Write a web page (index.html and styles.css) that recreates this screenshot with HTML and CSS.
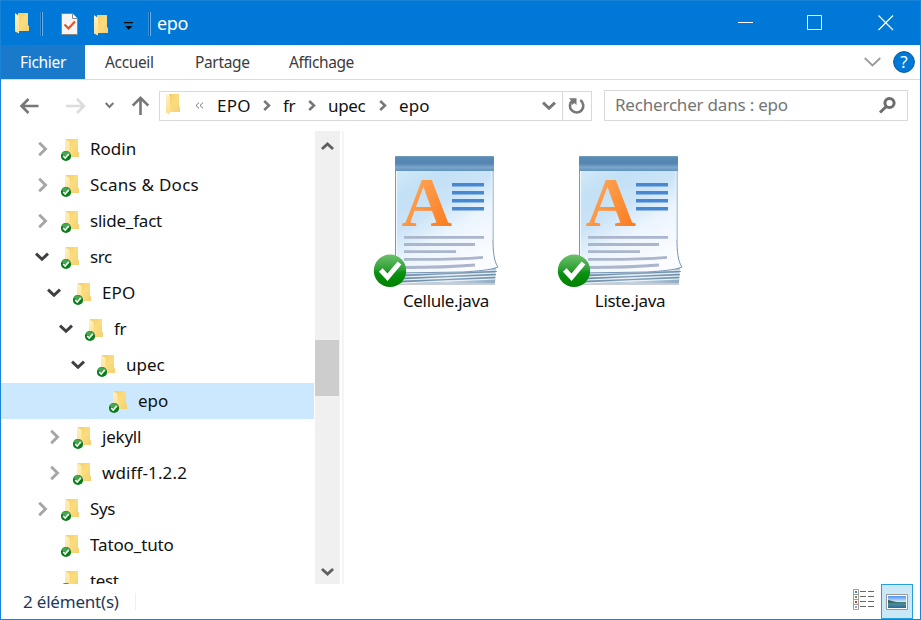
FILE: index.html
```html
<!DOCTYPE html>
<html lang="fr">
<head>
<meta charset="utf-8">
<title>epo</title>
<link rel="stylesheet" href="styles.css">
</head>
<body>
<svg class="defs" width="0" height="0" aria-hidden="true">
  <defs>
    <linearGradient id="gold" x1="0" y1="0" x2="1" y2="1"><stop offset="0" stop-color="#f6cf69"/><stop offset=".5" stop-color="#fbdc7f"/><stop offset="1" stop-color="#f3cf73"/></linearGradient>
    <linearGradient id="flap" x1="0" y1="0" x2="0" y2="1"><stop offset="0" stop-color="#fff0bb"/><stop offset="1" stop-color="#fbe094"/></linearGradient>
    <linearGradient id="green" x1="0" y1="0" x2="0" y2="1"><stop offset="0" stop-color="#6cc06a"/><stop offset=".45" stop-color="#2ea035"/><stop offset=".55" stop-color="#0b9212"/><stop offset="1" stop-color="#008000"/></linearGradient>
    <linearGradient id="band" x1="0" y1="0" x2="0" y2="1"><stop offset="0" stop-color="#5a8db9"/><stop offset=".5" stop-color="#5585b0"/><stop offset=".75" stop-color="#7ba6cb"/><stop offset="1" stop-color="#5e92bd"/></linearGradient>
    <linearGradient id="paper" x1="0" y1="0" x2=".6" y2="1"><stop offset="0" stop-color="#d3eafa"/><stop offset=".22" stop-color="#c3e0f5"/><stop offset=".45" stop-color="#cbe4f7"/><stop offset=".68" stop-color="#ecf5fd"/><stop offset="1" stop-color="#fafcff"/></linearGradient>
    <linearGradient id="orange" x1="0" y1="0" x2="1" y2="1"><stop offset="0" stop-color="#ffb36b"/><stop offset="1" stop-color="#fa7414"/></linearGradient>
    <linearGradient id="sheets" x1="0" y1="0" x2="1" y2="0"><stop offset="0" stop-color="#7b98b3"/><stop offset=".5" stop-color="#c5d6e5"/><stop offset="1" stop-color="#91abc3"/></linearGradient>
    <linearGradient id="sky" x1="0" y1="0" x2="0" y2="1"><stop offset="0" stop-color="#4f8ff3"/><stop offset=".5" stop-color="#d8edf8"/><stop offset=".52" stop-color="#477c70"/><stop offset=".7" stop-color="#458b9a"/><stop offset="1" stop-color="#2b67a8"/></linearGradient>
  </defs>
  <symbol id="folder" viewBox="0 0 18 22">
    <path fill="url(#gold)" d="M4 1h10v12l1 1v5H4z"/>
    <path fill="url(#flap)" d="M1 1l4 3v17.500l-4-2z"/>
  </symbol>
  <symbol id="synced" viewBox="0 0 19 24">
    <path fill="url(#gold)" d="M5 1h12v12.500l1 1v4.500H5z"/>
    <path fill="url(#flap)" d="M4 1l4.500 3v17L4 18z"/>
    <circle cx="5" cy="18" r="5.100" fill="#087e17"/>
    <ellipse cx="5" cy="15.600" rx="3.800" ry="2.300" fill="#4aa552"/>
    <path fill="none" stroke="#fff" stroke-width="1.600" d="M2.200 18l2 2 3.600-4"/>
  </symbol>
  <symbol id="right" viewBox="0 0 12 16"><path fill="none" stroke="currentColor" stroke-width="2.900" d="M2.200 1.800l6.300 6.200-6.300 6.200"/></symbol>
  <symbol id="crumb" viewBox="0 0 8 11"><path fill="none" stroke="currentColor" stroke-width="2.500" d="M1.200 1l4.800 4.500L1.200 10"/></symbol>
  <symbol id="down" viewBox="0 0 14 10"><path fill="none" stroke="currentColor" stroke-width="3" d="M1 1.700l6 5.600 6-5.600"/></symbol>
  <symbol id="document" viewBox="0 0 128 136">
    <path fill="#c9cdd1" d="M24 122h99v9H24z"/>
    <path fill="url(#sheets)" d="M24 106l100 7-1 16H24z"/>
    <path fill="none" stroke="#eff5fa" d="M30 120l94-4M30 123l94-4M30 126l93-4M30 129l93-4"/>
    <path fill="none" stroke="#597b98" stroke-width=".7" d="M30 121.500l95-4M30 124.500l94-4M30 127.500l93-4"/>
    <path fill="url(#paper)" stroke="#7797b5" stroke-width="1" d="M23.500 15H121v70c0 12 1 23 5 28-7 3-20 4-35 5L23.500 119z"/>
    <path fill="none" stroke="#eff9ff" d="M24.500 17v101M120 17v69"/>
    <path fill="url(#band)" d="M23 3q0-1 1-1h97q1 0 1 1v14H23z"/>
    <path fill="none" stroke="#7299ba" d="M24 2.500h97"/>
    <text class="letter" x="29.500" y="71.500" fill="url(#orange)">A</text>
    <g fill="#4888d3"><path d="M80 29h32v3.500H80zM80 37h32v3.500H80zM80 45h32v3.500H80zM80 53h32v3.500H80z"/></g>
    <path fill="none" stroke="#abb5cb" stroke-width="2.800" d="M32 83.300h80M32 90.500h71M32 97.600h52M32 105.300q50 .5 79-2M32 113.500q42 0 71-2.500"/>
    <circle cx="18" cy="116.800" r="16.200" fill="url(#green)"/>
    <path fill="none" stroke="#fff" stroke-width="5" d="M8.800 116l6.700 7.300L27.500 109"/>
  </symbol>
</svg>

<div class="window">
  <header class="titlebar">
    <svg class="tb-folder" width="18" height="22"><use href="#folder"/></svg>
    <i class="tb-sep first"></i>
    <svg class="tb-check" width="17" height="22" viewBox="0 0 17 22"><path fill="#f6f5f4" stroke="#858585" d="M.5.500h11l5 5v16H.5z"/><path fill="#fff" stroke="#858585" d="M11.500.500v5h5"/><path fill="none" stroke="#e65321" stroke-width="2.200" d="M3.500 11.500l4 4 6.500-7"/></svg>
    <svg class="tb-folder second" width="18" height="22"><use href="#folder"/></svg>
    <svg class="tb-more" width="9" height="8" viewBox="0 0 9 8"><path d="M0 0h9v1.200H0zM1 4h7.500L4.700 7.800z"/></svg>
    <i class="tb-sep"></i>
    <span class="title">epo</span>
    <div class="controls">
      <svg width="16" height="16" viewBox="0 0 16 16"><path d="M0 7.500h15"/></svg>
      <svg width="16" height="16" viewBox="0 0 16 16"><path d="M.5.500h14v14H.5z"/></svg>
      <svg width="16" height="16" viewBox="0 0 16 16"><path stroke-width="1.200" d="M.5.500l14.500 14.500M15 .500L.5 15"/></svg>
    </div>
  </header>

  <nav class="tabs">
    <span class="tab file">Fichier</span>
    <span class="tab home">Accueil</span>
    <span class="tab share">Partage</span>
    <span class="tab view">Affichage</span>
    <svg class="expand" width="17" height="10" viewBox="0 0 17 10"><path d="M.7 1l7.800 7.500L16.300 1"/></svg>
    <svg class="help" width="22" height="22" viewBox="0 0 22 22"><circle cx="11" cy="11" r="10.400"/><text x="11" y="17">?</text></svg>
  </nav>

  <div class="toolbar">
    <svg class="back" width="20" height="16" viewBox="0 0 20 16"><path d="M19.500 8H2.500M9.500 1l-7 7 7 7"/></svg>
    <svg class="forward" width="20" height="16" viewBox="0 0 20 16"><path d="M0 8h18M11 1l7 7-7 7"/></svg>
    <svg class="recent" width="9" height="7" viewBox="0 0 9 7"><path d="M.7 1l3.800 4L8.300 1"/></svg>
    <svg class="up" width="18" height="19" viewBox="0 0 18 19"><path d="M8.500 19V2M.7 9.700l7.800-7.900 7.800 7.900"/></svg>
    <div class="address">
      <svg width="18" height="22"><use href="#folder"/></svg>
      <svg class="double" width="9" height="7" viewBox="0 0 9 7"><path d="M4 .700L1 3.500l3 2.800M8 .700L5 3.500l3 2.800"/></svg>
      <div class="crumbs">
        <span class="c-root">EPO</span><svg width="8" height="11"><use href="#crumb"/></svg>
        <span>fr</span><svg width="8" height="11"><use href="#crumb"/></svg>
        <span>upec</span><svg width="8" height="11"><use href="#crumb"/></svg>
        <span class="c-last">epo</span>
      </div>
      <svg class="drop" width="14" height="10"><use href="#down"/></svg>
      <div class="refresh"><svg width="18" height="18" viewBox="0 0 18 18"><path fill="none" stroke="#777" stroke-width="2.600" d="M12.300 3.200A6.700 6.700 0 1 1 4.500 3.500"/><path fill="#777" d="M1 1.200h7.500v7L6.500 6 4 8 3.500 4z"/></svg></div>
    </div>
    <div class="search"><span>Rechercher dans : epo</span><svg width="18" height="18" viewBox="0 0 18 18"><circle cx="11.500" cy="7" r="4.600"/><path d="M8.300 10.500L2 16.500"/></svg></div>
  </div>

  <main class="body">
    <div class="tree">
      <div class="row"><svg class="arrow" width="12" height="16"><use href="#right"/></svg><svg class="ico" width="19" height="24"><use href="#synced"/></svg><span class="t-rodin">Rodin</span></div>
      <div class="row"><svg class="arrow" width="12" height="16"><use href="#right"/></svg><svg class="ico" width="19" height="24"><use href="#synced"/></svg><span class="t-scans">Scans &amp; Docs</span></div>
      <div class="row"><svg class="arrow" width="12" height="16"><use href="#right"/></svg><svg class="ico" width="19" height="24"><use href="#synced"/></svg><span class="t-slide">slide_fact</span></div>
      <div class="row"><svg class="arrow open" width="14" height="10"><use href="#down"/></svg><svg class="ico" width="19" height="24"><use href="#synced"/></svg><span>src</span></div>
      <div class="row l1"><svg class="arrow open" width="14" height="10"><use href="#down"/></svg><svg class="ico" width="19" height="24"><use href="#synced"/></svg><span class="t-root">EPO</span></div>
      <div class="row l2"><svg class="arrow open" width="14" height="10"><use href="#down"/></svg><svg class="ico" width="19" height="24"><use href="#synced"/></svg><span>fr</span></div>
      <div class="row l3"><svg class="arrow open" width="14" height="10"><use href="#down"/></svg><svg class="ico" width="19" height="24"><use href="#synced"/></svg><span class="t-upec">upec</span></div>
      <div class="row l4 selected"><i class="arrow"></i><svg class="ico" width="19" height="24"><use href="#synced"/></svg><span class="t-epo">epo</span></div>
      <div class="row l1"><svg class="arrow" width="12" height="16"><use href="#right"/></svg><svg class="ico" width="19" height="24"><use href="#synced"/></svg><span class="t-jekyll">jekyll</span></div>
      <div class="row l1"><svg class="arrow" width="12" height="16"><use href="#right"/></svg><svg class="ico" width="19" height="24"><use href="#synced"/></svg><span class="t-wdiff">wdiff-1.2.2</span></div>
      <div class="row"><svg class="arrow" width="12" height="16"><use href="#right"/></svg><svg class="ico" width="19" height="24"><use href="#synced"/></svg><span>Sys</span></div>
      <div class="row"><i class="arrow"></i><svg class="ico" width="19" height="24"><use href="#synced"/></svg><span class="t-tatoo">Tatoo_tuto</span></div>
      <div class="row"><i class="arrow"></i><svg class="ico" width="19" height="24"><use href="#synced"/></svg><span>test</span></div>
    </div>
    <div class="scrollbar">
      <svg width="14" height="10"><use href="#down"/></svg>
      <i class="thumb"></i>
      <svg width="14" height="10"><use href="#down"/></svg>
    </div>
    <div class="files">
      <figure><svg width="128" height="136"><use href="#document"/></svg><figcaption>Cellule.java</figcaption></figure>
      <figure><svg width="128" height="136"><use href="#document"/></svg><figcaption>Liste.java</figcaption></figure>
    </div>
  </main>

  <footer class="status">
    <span>2 élément(s)</span><i class="divider"></i>
    <svg class="details" width="22" height="22" viewBox="0 0 22 22"><path fill="#fff" stroke="#a19f9d" d="M.5.500h5v20h-5zM.5 5.500h5M.5 10.500h5M.5 15.500h5"/><path fill="none" stroke="#666" d="M7 2.500h6M15 2.500h6M7 7.500h6M15 7.500h6M7 12.500h6M15 12.500h6M7 17.500h6M15 17.500h6"/><path fill="#388caf" d="M2 2h2v2H2z"/><path fill="#858540" d="M2 7h2v2H2z"/><path fill="#c6401d" d="M2 12h2v2H2z"/><path fill="#8da5cf" d="M2 17h2v2H2z"/></svg>
    <div class="large"><svg width="22" height="16" viewBox="0 0 22 16"><path fill="#fff" stroke="#999" d="M.5.500h21v15H.5z"/><path fill="url(#sky)" d="M2 2h18v12H2z"/><path fill="#315e50" d="M2 6l6 1.500 5 1H2z"/></svg></div>
  </footer>
</div>
</body>
</html>
```
FILE: styles.css
```css
* { box-sizing: border-box; }
body { margin: 0; background: #fff; color: #111; font: 17px/24px "Noto Sans", "Open Sans", sans-serif; letter-spacing: -.35px; overflow: hidden; }
svg { display: block; flex: none; overflow: visible; }
i { display: block; flex: none; }
.defs { position: absolute; }
.window { width: 921px; height: 620px; border: 1px solid #1883d7; display: flex; flex-direction: column; background: #fff; }

.titlebar { height: 44px; flex: none; background: #0078d7; color: #fff; display: flex; align-items: center; padding: 2px 26px 0 13px; }
.tb-folder { margin-top: -2px; }
.tb-folder.second { margin: 1px 0 0 15px; }
.tb-sep { width: 3px; height: 24px; background: #12558c; border-right: 1px solid #6bafea; border-left: 1px solid #3691dc; }
.tb-sep.first { margin-left: 8px; }
.tb-check { margin-left: 18px; }
.tb-more { margin: 4px 15px 0 13px; fill: #000; }
.title { margin: -2px 0 0 6px; font-size: 18px; letter-spacing: -.3px; }
.controls { margin-left: auto; display: flex; gap: 53px; fill: none; stroke: #fff; padding-bottom: 2px; }
.controls svg:nth-child(2) { margin: 0 2px 0 0; }

.tabs { height: 35px; flex: none; display: flex; align-items: center; border-bottom: 1px solid #dadbdc; font-size: 15.500px; color: #3b3b3b; padding-right: 5px; }
.tab { white-space: nowrap; }
.file { width: 84px; align-self: stretch; line-height: 34px; padding-left: 19px; color: #fff; background: #1979ca; letter-spacing: -.3px; }
.home { width: 90px; padding-left: 20px; }
.share { width: 94px; padding-left: 20px; }
.view { padding-left: 20px; letter-spacing: -.4px; }
.expand { margin-left: auto; margin-right: 12px; fill: none; stroke: #9b9b9b; stroke-width: 1.800; }
.help { fill: #0078d7; stroke: #07569a; }
.help text { fill: #fff; stroke: none; font: 17px "Noto Sans", sans-serif; letter-spacing: 0; text-anchor: middle; }

.toolbar { height: 51px; flex: none; display: flex; align-items: center; padding: 0 12px 0 18px; }
.toolbar > svg { fill: none; stroke: #777; stroke-width: 2.600; }
.toolbar .forward { margin-left: 27px; stroke: #dcdcdc; }
.toolbar .recent { margin-left: 19px; stroke-width: 2; }
.toolbar .up { margin: 0 9px 0 18px; }
.address { width: 433px; flex: none; height: 30px; border: 1px solid #d9d9d9; display: flex; align-items: center; padding-left: 5px; }
.address > svg:first-child { margin-top: -4px; }
.double { margin: -1px 0 0 12px; fill: none; stroke: #777; }
.crumbs { display: grid; grid-template-columns: 46px 20px 25px 20px 51px 20px 50px; align-items: center; margin-left: 13px; color: #777; }
.crumbs span { color: #111; white-space: nowrap; }
.c-root { letter-spacing: .2px; }
.crumbs .c-last { letter-spacing: .1px; }
.drop { margin-left: auto; margin-right: 6px; color: #777; }
.refresh { width: 29px; height: 28px; border-left: 1px solid #d9d9d9; display: flex; align-items: center; justify-content: center; }
.search { flex: 1; height: 31px; border: 1px solid #d9d9d9; margin: -1px 0 0 12px; padding: 0 11px 0 10px; display: flex; align-items: center; justify-content: space-between; color: #757575; letter-spacing: -.2px; }
.search svg { fill: none; stroke: #6d6d6d; stroke-width: 3; }

.body { height: 453px; flex: none; display: flex; }
.tree { width: 314px; overflow: hidden; }
.row { height: 36px; padding-left: 36px; display: flex; align-items: center; white-space: nowrap; width: 313px; }
.l1 { padding-left: 48px; }
.l2 { padding-left: 60px; }
.l3 { padding-left: 72px; }
.l4 { padding-left: 84px; }
.selected { background: #cce8ff; }
.arrow { width: 12px; margin: 0 12px 0 0; color: #a6a6a6; }
.arrow.open { width: 14px; margin: -1px 12px 0 -2px; color: #404040; }
.ico { margin: 2px 10px 0 0; }
.t-root { letter-spacing: .1px; }
.t-rodin, .t-epo, .t-upec { letter-spacing: 0; }
.t-scans { letter-spacing: .25px; }
.t-slide, .t-jekyll { letter-spacing: -.22px; }
.t-wdiff { letter-spacing: .12px; }
.t-tatoo { letter-spacing: -.12px; }
.scrollbar { width: 25px; background: #f0f0f0; color: #606060; display: flex; flex-direction: column; align-items: center; padding: 10px 1px 7px 0; }
.scrollbar svg { width: 13px; }
.scrollbar svg:first-child { transform: rotate(180deg); }
.thumb { width: 24px; height: 56px; margin: 189px 0 auto; background: #cdcdcd; }
.files { flex: 1; margin-left: 2px; border-left: 2px solid #f5f5f5; display: flex; padding: 23px 0 0 10px; }
figure { width: 184px; margin: 0; display: flex; flex-direction: column; align-items: center; }
figure svg { margin-right: 20px; }
figcaption { margin-top: -1px; }
.letter { font: bold 70px "Liberation Serif", serif; letter-spacing: 0; }

.status { flex: 1; display: flex; align-items: center; padding: 0 7px 0 22px; color: #1e395b; }
.status span { letter-spacing: -.2px; margin-top: 1px; }
.divider { width: 1px; height: 17px; margin-left: 16px; background: #eee; }
.details { margin: -3px 6px 0 auto; }
.large { width: 32px; height: 35px; border: 1px solid #26a0da; background: #cbe8f6; display: flex; align-items: center; justify-content: center; }
```
